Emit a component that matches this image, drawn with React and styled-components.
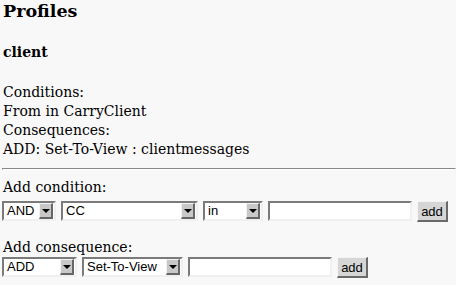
import React from "react";
import styled, { createGlobalStyle } from "styled-components";

const GlobalStyle = createGlobalStyle`
  html, body {
    margin: 0;
    padding: 0;
    background: #f8f8f8;
  }
  body {
    padding-left: 2px;
    font-family: "DejaVu Serif", serif;
    color: #000;
  }
`;

const Page = styled.div`
  display: flex;
  flex-direction: column;
  padding-left: 1px;
`;

const Title = styled.h3`
  margin: 1px 0 0 0;
  font-size: 17.5px;
  line-height: 20px;
  font-weight: bold;
`;

const SubTitle = styled.h4`
  margin: 23px 0 0 0;
  font-size: 14px;
  line-height: 17px;
  font-weight: bold;
`;

const Lines = styled.div`
  margin-top: 22px;
  font-size: 14px;
  line-height: 19px;
`;

const Rule = styled.hr`
  margin: 9px 0 0 -1px;
  height: 0;
  border-style: solid;
  border-width: 1px;
  border-color: #888 #fff #fff #888;
`;

const Label = styled.div`
  margin-top: ${(p) => p.$top}px;
  font-size: 14px;
  line-height: 19px;
`;

const Row = styled.div`
  display: flex;
  align-items: flex-start;
  gap: 5px;
  margin-top: ${(p) => p.$top}px;
  margin-left: -1px;
`;

const SelectBox = styled.div`
  display: flex;
  align-items: center;
  box-sizing: border-box;
  width: ${(p) => p.$w}px;
  height: 20px;
  border-style: solid;
  border-width: 2px;
  border-color: #7b7b7b #f0f0f0 #f0f0f0 #7b7b7b;
  background: #fff;
`;

const SelectText = styled.span`
  flex: 1;
  padding-left: 3px;
  font-family: "Liberation Sans", sans-serif;
  font-size: 13px;
  line-height: 16px;
  white-space: nowrap;
  overflow: hidden;
`;

const ArrowBox = styled.span`
  display: flex;
  align-items: center;
  justify-content: center;
  box-sizing: border-box;
  width: 14px;
  height: 16px;
  margin-right: 1px;
  border-style: solid;
  border-width: 1px 2px 2px 1px;
  border-color: #f2f2f2 #666 #666 #f2f2f2;
  background: #c8c8c8;
`;

const Arrow = styled.span`
  width: 0;
  height: 0;
  border-left: 4px solid transparent;
  border-right: 4px solid transparent;
  border-top: 4px solid #000;
`;

const TextInput = styled.input`
  box-sizing: border-box;
  width: ${(p) => p.$w}px;
  height: 20px;
  margin: 0;
  padding: 0 3px;
  border-style: solid;
  border-width: 2px;
  border-color: #7b7b7b #f0f0f0 #f0f0f0 #7b7b7b;
  background: #fff;
  outline: none;
`;

const Button = styled.button`
  box-sizing: border-box;
  width: 31px;
  height: 21px;
  margin: 0;
  padding: 0;
  border-style: solid;
  border-width: 1px 2px 2px 1px;
  border-color: #f4f4f4 #6a6a6a #6a6a6a #f4f4f4;
  background: #d6d6d6;
  font-family: "Liberation Sans", sans-serif;
  font-size: 13px;
  color: #000;
`;

function Select({ w, value }) {
  return (
    <SelectBox $w={w}>
      <SelectText>{value}</SelectText>
      <ArrowBox>
        <Arrow />
      </ArrowBox>
    </SelectBox>
  );
}

export default function App() {
  return (
    <>
      <GlobalStyle />
      <Page>
        <Title>Profiles</Title>
        <SubTitle>client</SubTitle>
        <Lines>
          <div>Conditions:</div>
          <div>From in CarryClient</div>
          <div>Consequences:</div>
          <div>ADD: Set-To-View : clientmessages</div>
        </Lines>
        <Rule />
        <Label $top={8}>Add condition:</Label>
        <Row $top={4}>
          <Select w={54} value="AND" />
          <Select w={137} value="CC" />
          <Select w={60} value="in" />
          <TextInput $w={144} />
          <Button>add</Button>
        </Row>
        <Label $top={16}>Add consequence:</Label>
        <Row $top={0}>
          <Select w={75} value="ADD" />
          <Select w={101} value="Set-To-View" />
          <TextInput $w={144} />
          <Button>add</Button>
        </Row>
      </Page>
    </>
  );
}
